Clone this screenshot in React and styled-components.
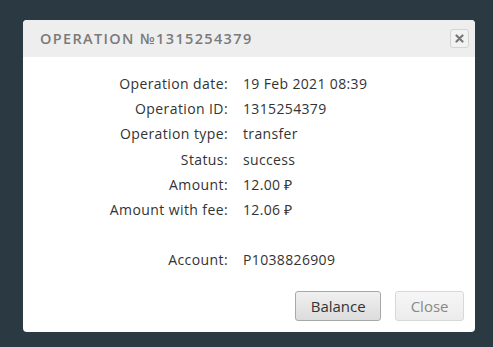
import React from "react";
import styled, { createGlobalStyle } from "styled-components";

const Global = createGlobalStyle`
  html, body { margin: 0; padding: 0; background: #2b3a42; }
  body { font-family: "Open Sans", "Liberation Sans", sans-serif; }
`;

const Page = styled.div`
  width: 493px;
  height: 347px;
  background: #2b3a42;
  padding: 20px 18px 0 23px;
  box-sizing: border-box;
`;

const Dialog = styled.div`
  width: 452px;
  height: 312px;
  background: #ffffff;
  border-radius: 4px;
  overflow: hidden;
  display: flex;
  flex-direction: column;
`;

const Header = styled.div`
  height: 37px;
  background: #eeeeee;
  display: flex;
  align-items: center;
  justify-content: space-between;
  padding: 0 6px 0 17px;
  box-sizing: border-box;
`;

const Title = styled.div`
  font-family: "Open Sans", sans-serif;
  font-weight: 600;
  font-size: 14.5px;
  letter-spacing: 1.35px;
  color: #7a7a7a;
`;

const CloseX = styled.button`
  width: 19px;
  height: 19px;
  padding: 0;
  border: 1px solid #d4d4d4;
  border-radius: 3px;
  background: #f2f2f2;
  display: flex;
  align-items: center;
  justify-content: center;
`;

const Body = styled.div`
  flex: 1;
  display: flex;
  flex-direction: column;
  padding-top: 14px;
`;

const Grid = styled.div`
  display: grid;
  grid-template-columns: 205px 1fr;
  column-gap: 15px;
  row-gap: 0;
`;

const Label = styled.div`
  text-align: right;
  font-size: 14px;
  letter-spacing: 0.4px;
  line-height: 25.2px;
  color: #333;
  margin-top: ${(p) => p.$gap || 0}px;
`;

const Value = styled.div`
  font-size: 14px;
  letter-spacing: 0.35px;
  line-height: 25.2px;
  color: #333;
  margin-top: ${(p) => p.$gap || 0}px;
`;

const Footer = styled.div`
  margin-top: auto;
  display: flex;
  justify-content: flex-end;
  gap: 14px;
  padding: 0 11px 11px 0;
`;

const Button = styled.button`
  height: 30px;
  padding: 0 14.5px;
  font-family: "Open Sans", sans-serif;
  font-size: 15px;
  color: ${(p) => (p.$muted ? "#888" : "#333")};
  border: 1px solid ${(p) => (p.$muted ? "#d8d8d8" : "#a8a8a8")};
  border-radius: 3px;
  background: ${(p) =>
    p.$muted
      ? "linear-gradient(#f6f6f6, #ececec)"
      : "linear-gradient(#f0f0f0, #dcdcdc)"};
`;

const rows = [
  ["Operation date:", "19 Feb 2021 08:39"],
  ["Operation ID:", "1315254379"],
  ["Operation type:", "transfer"],
  ["Status:", "success"],
  ["Amount:", "12.00 ₽"],
  ["Amount with fee:", "12.06 ₽"],
];

export default function App() {
  return (
    <>
      <Global />
      <Page>
        <Dialog>
          <Header>
            <Title>OPERATION №1315254379</Title>
            <CloseX aria-label="close">
              <svg width="9" height="9" viewBox="0 0 9 9">
                <path d="M1.5 1.5L7.5 7.5M7.5 1.5L1.5 7.5" stroke="#777" strokeWidth="2.2" strokeLinecap="round" />
              </svg>
            </CloseX>
          </Header>
          <Body>
            <Grid>
              {rows.map(([l, v]) => (
                <React.Fragment key={l}>
                  <Label>{l}</Label>
                  <Value>{v}</Value>
                </React.Fragment>
              ))}
              <Label $gap={25}>Account:</Label>
              <Value $gap={25}>P1038826909</Value>
            </Grid>
            <Footer>
              <Button>Balance</Button>
              <Button $muted>Close</Button>
            </Footer>
          </Body>
        </Dialog>
      </Page>
    </>
  );
}
